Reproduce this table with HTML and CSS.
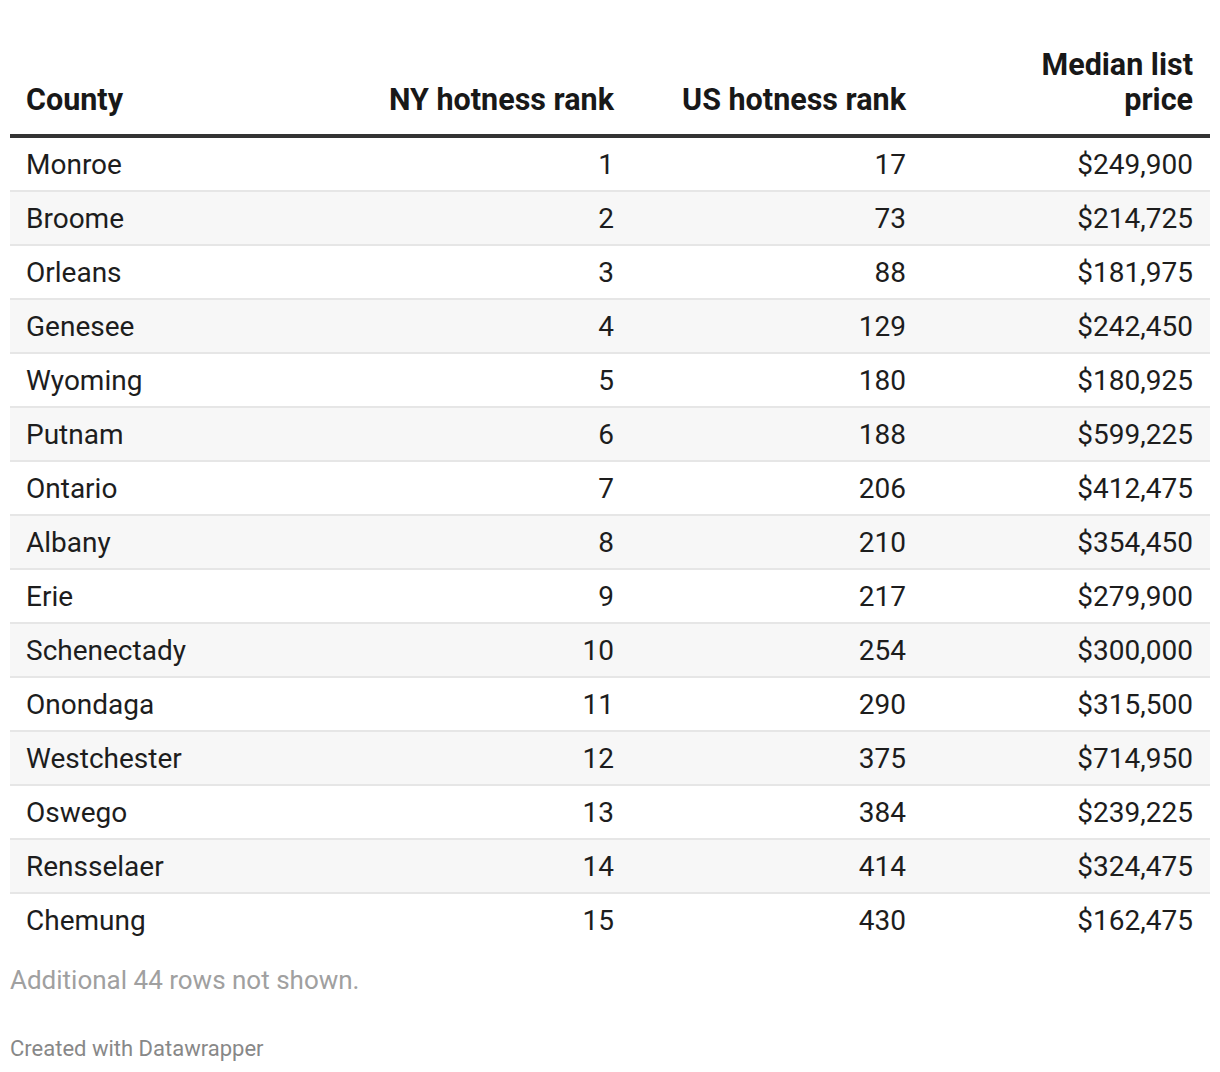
FILE: index.html
```html
<!DOCTYPE html>
<html>
<head>
<meta charset="utf-8">
<link rel="stylesheet" href="styles.css">
</head>
<body>
<div class="chart">
  <table class="tbl">
    <colgroup>
      <col class="c1"><col class="c2"><col class="c3"><col class="c4">
    </colgroup>
    <thead>
      <tr>
        <th class="left">County</th>
        <th class="num">NY hotness rank</th>
        <th class="num">US hotness rank</th>
        <th class="num">Median list<br>price</th>
      </tr>
    </thead>
    <tbody>
      <tr><td class="left">Monroe</td><td class="num">1</td><td class="num">17</td><td class="num">$249,900</td></tr>
      <tr><td class="left">Broome</td><td class="num">2</td><td class="num">73</td><td class="num">$214,725</td></tr>
      <tr><td class="left">Orleans</td><td class="num">3</td><td class="num">88</td><td class="num">$181,975</td></tr>
      <tr><td class="left">Genesee</td><td class="num">4</td><td class="num">129</td><td class="num">$242,450</td></tr>
      <tr><td class="left">Wyoming</td><td class="num">5</td><td class="num">180</td><td class="num">$180,925</td></tr>
      <tr><td class="left">Putnam</td><td class="num">6</td><td class="num">188</td><td class="num">$599,225</td></tr>
      <tr><td class="left">Ontario</td><td class="num">7</td><td class="num">206</td><td class="num">$412,475</td></tr>
      <tr><td class="left">Albany</td><td class="num">8</td><td class="num">210</td><td class="num">$354,450</td></tr>
      <tr><td class="left">Erie</td><td class="num">9</td><td class="num">217</td><td class="num">$279,900</td></tr>
      <tr><td class="left">Schenectady</td><td class="num">10</td><td class="num">254</td><td class="num">$300,000</td></tr>
      <tr><td class="left">Onondaga</td><td class="num">11</td><td class="num">290</td><td class="num">$315,500</td></tr>
      <tr><td class="left">Westchester</td><td class="num">12</td><td class="num">375</td><td class="num">$714,950</td></tr>
      <tr><td class="left">Oswego</td><td class="num">13</td><td class="num">384</td><td class="num">$239,225</td></tr>
      <tr><td class="left">Rensselaer</td><td class="num">14</td><td class="num">414</td><td class="num">$324,475</td></tr>
      <tr><td class="left">Chemung</td><td class="num">15</td><td class="num">430</td><td class="num">$162,475</td></tr>
    </tbody>
  </table>
  <div class="note">Additional 44 rows not shown.</div>
  <div class="credit">Created with Datawrapper</div>
</div>
</body>
</html>
```
FILE: styles.css
```css
html, body {
  margin: 0;
  padding: 0;
  background: #fff;
}
body {
  font-family: Roboto, "Liberation Sans", sans-serif;
  color: #1d1d1d;
}
.chart {
  padding: 47px 10px 0 10px;
}
.tbl {
  width: 1200px;
  border-collapse: collapse;
  table-layout: fixed;
}
.c1 { width: 350px; }
.c2 { width: 271px; }
.c3 { width: 292px; }
.c4 { width: 287px; }
th {
  font-weight: 700;
  font-size: 30.5px;
  line-height: 35px;
  color: #181818;
  vertical-align: bottom;
  padding: 0 17px 17px 17px;
  border-bottom: 4px solid #333;
}
td {
  font-size: 28px;
  height: 52px;
  padding: 0 17px;
  vertical-align: middle;
  border-bottom: 2px solid #e6e6e6;
}
tbody tr:nth-child(even) td {
  background: #f7f7f7;
}
tbody tr:last-child td {
  border-bottom: none;
}
.left {
  text-align: left;
  padding-left: 16px;
}
.num { text-align: right; }
.note {
  margin-top: 19px;
  font-size: 26px;
  color: #a0a0a0;
}
.credit {
  margin-top: 41px;
  font-size: 22px;
  color: #888;
}
```
